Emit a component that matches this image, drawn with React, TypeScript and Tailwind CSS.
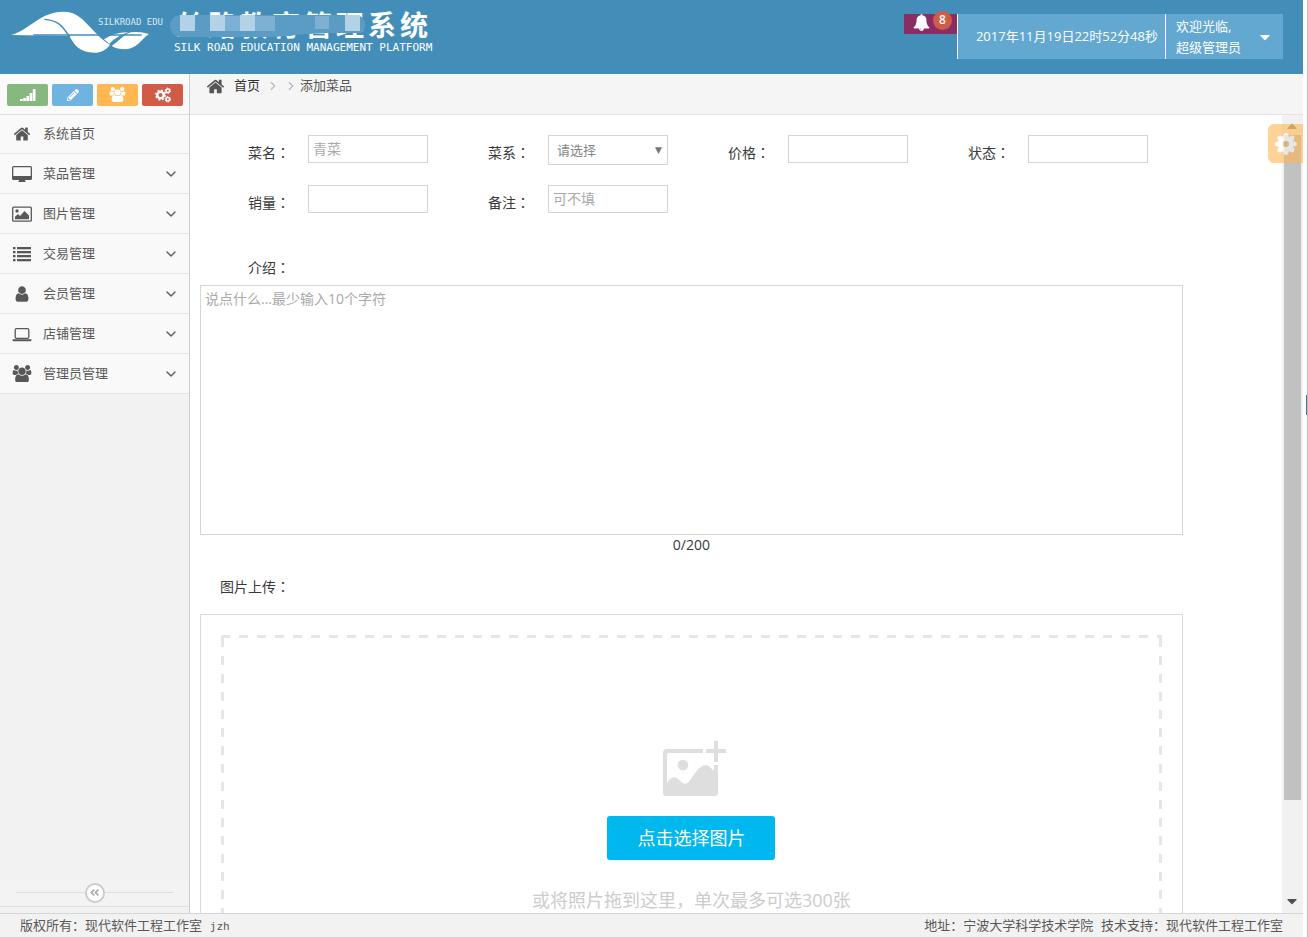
import { useState } from 'react';
import type { ReactNode } from 'react';
import { ChevronDown, ChevronRight } from 'lucide-react';
import { FaAngleDoubleLeft, FaCaretDown, FaPencilAlt } from 'react-icons/fa';

const HomeIcon = ({ className }: { className: string }) => (
  <svg viewBox="0 0 1792 1792" fill="currentColor" className={className} aria-hidden>
    <path d="M1472 992v480q0 26-19 45t-45 19h-384v-384h-256v384h-384q-26 0-45-19t-19-45v-480q0-1 .5-3t.5-3l575-474 575 474q1 2 1 6zm223-69l-62 74q-8 9-21 11h-3q-13 0-21-7l-692-577-692 577q-12 8-24 7-13-2-21-11l-62-74q-8-10-7-23.5t11-21.5l719-599q32-26 76-26t76 26l244 204v-195q0-14 9-23t23-9h192q14 0 23 9t9 23v408l219 182q10 8 11 21.5t-7 23.5z" />
  </svg>
);

const BellIcon = () => (
  <svg viewBox="0 0 1792 1792" fill="currentColor" className="w-[17px]" aria-hidden>
    <path d="M912 1696q0-16-16-16-59 0-101.5-42.5t-42.5-101.5q0-16-16-16t-16 16q0 73 51.5 124.5t124.5 51.5q16 0 16-16zm816-288q0 52-38 90t-90 38h-448q0 106-75 181t-181 75-181-75-75-181h-448q-52 0-90-38t-38-90q50-42 91-88t85-119.5 74.5-158.5 50-206 19.5-260q0-152 117-282.5t307-158.5q-8-19-8-39 0-40 28-68t68-28 68 28 28 68q0 20-8 39 190 28 307 158.5t117 282.5q0 139 19.5 260t50 206 74.5 158.5 85 119.5 91 88z" />
  </svg>
);

const GroupIcon = ({ className }: { className: string }) => (
  <svg viewBox="0 0 2048 1792" fill="currentColor" className={className} aria-hidden>
    <path d="M657 896q-162 5-265 128h-134q-82 0-138-40.5t-56-118.5q0-353 124-353 6 0 43.5 21t97.5 42.5 119 21.5q67 0 133-23-5 37-5 66 0 139 81 256zm1071 637q0 120-73 189.5t-194 69.5h-874q-121 0-194-69.5t-73-189.5q0-53 3.5-103.5t14-109 26.5-108.5 43-97.5 62-81 85.5-53.5 111.5-20q10 0 43 21.5t73 48 107 48 135 21.5 135-21.5 107-48 73-48 43-21.5q61 0 111.5 20t85.5 53.5 62 81 43 97.5 26.5 108.5 14 109 3.5 103.5zm-1024-1277q0 106-75 181t-181 75-181-75-75-181 75-181 181-75 181 75 75 181zm704 384q0 159-112.5 271.5t-271.5 112.5-271.5-112.5-112.5-271.5 112.5-271.5 271.5-112.5 271.5 112.5 112.5 271.5zm576 225q0 78-56 118.5t-138 40.5h-134q-103-123-265-128 81-117 81-256 0-29-5-66 66 23 133 23 59 0 119-21.5t97.5-42.5 43.5-21q124 0 124 353zm-128-609q0 106-75 181t-181 75-181-75-75-181 75-181 181-75 181 75 75 181z" />
  </svg>
);

const UserIcon = ({ className }: { className: string }) => (
  <svg viewBox="0 0 1792 1792" fill="currentColor" className={className} aria-hidden>
    <path d="M1536 1399q0 109-62.5 187t-150.5 78h-854q-88 0-150.5-78t-62.5-187q0-85 8.5-160.5t31.5-152 58.5-131 94-89 134.5-34.5q131 128 313 128t313-128q76 0 134.5 34.5t94 89 58.5 131 31.5 152 8.5 160.5zm-256-887q0 159-112.5 271.5t-271.5 112.5-271.5-112.5-112.5-271.5 112.5-271.5 271.5-112.5 271.5 112.5 112.5 271.5z" />
  </svg>
);

const DesktopIcon = () => (
  <svg viewBox="0 0 20 18" fill="currentColor" className="w-5" aria-hidden>
    <path fillRule="evenodd" d="M1.5 1h17A1.5 1.5 0 0 1 20 2.500v11a1.500 1.500 0 0 1-1.500 1.500H13v1.500h1V17H6v-.5h1V15H1.500A1.500 1.500 0 0 1 0 13.500v-11A1.500 1.500 0 0 1 1.500 1zM1.300 2.300v8.700h17.400V2.300z" />
  </svg>
);

const PictureIcon = () => (
  <svg viewBox="0 0 20 18" className="w-5" aria-hidden>
    <rect x="0.700" y="2.200" width="18.600" height="14" rx="1" fill="none" stroke="currentColor" strokeWidth="1.300" />
    <circle cx="5" cy="6" r="1.700" fill="currentColor" />
    <path d="M3 14.200v-2.500l3-2.700 2 2 4.500-5L17 10.500v3.700z" fill="currentColor" />
  </svg>
);

const ListIcon = () => (
  <svg viewBox="0 0 20 18" fill="currentColor" className="w-5" aria-hidden>
    {[2, 6, 10, 14].map((y) => (
      <g key={y}>
        <rect x="1" y={y} width="2.500" height="2.300" />
        <rect x="5" y={y} width="14" height="2.300" />
      </g>
    ))}
  </svg>
);

const LaptopIcon = () => (
  <svg viewBox="0 0 20 18" className="w-5" aria-hidden>
    <rect x="3.200" y="3.700" width="13.600" height="9.600" rx="1.300" fill="none" stroke="currentColor" strokeWidth="1.300" />
    <path d="M0.500 14.300h19v1a1.200 1.200 0 0 1-1.200 1H1.700a1.200 1.200 0 0 1-1.200-1z" fill="currentColor" />
  </svg>
);

const SignalIcon = () => (
  <svg viewBox="0 0 16 14" fill="currentColor" className="w-4" aria-hidden>
    <path d="M0 11h2.700v2H0zM3.200 10h2.700v3H3.200zM6.400 8h2.700v5H6.400zM9.600 5h2.700v8H9.600zM12.800 1h2.700v12h-2.700z" />
  </svg>
);

const CogsIcon = () => (
  <svg viewBox="0 0 16 16" fill="none" stroke="currentColor" className="w-4" aria-hidden>
    <circle cx="5.500" cy="8" r="3.200" strokeWidth="2.400" />
    <circle cx="5.500" cy="8" r="4.600" strokeWidth="1.700" strokeDasharray="1.900 1.713" />
    <circle cx="12.800" cy="3.700" r="1.800" strokeWidth="1.500" />
    <circle cx="12.800" cy="3.700" r="2.700" strokeWidth="1" strokeDasharray="1.500 1.327" />
    <circle cx="12.800" cy="12.300" r="1.800" strokeWidth="1.500" />
    <circle cx="12.800" cy="12.300" r="2.700" strokeWidth="1" strokeDasharray="1.500 1.327" />
  </svg>
);

const UploadIcon = () => (
  <svg viewBox="0 0 64 56" className="w-16" fill="#dedede" aria-hidden>
    <path d="M4 8h36v4H6a2 2 0 0 0-2 2v28c3-6 8-8 12-3 4 4 7 6 12-1 5-8 12-18 19-12l4 4V24h4v28a3 3 0 0 1-3 3H3a3 3 0 0 1-3-3V12a4 4 0 0 1 4-4z" />
    <circle cx="20" cy="24" r="5.300" />
    <path d="M51 0h4v8h8v4h-8v9h-4v-9h-8V8h8z" />
  </svg>
);

// flower-shaped cog of the settings tab
const FlowerIcon = () => (
  <svg viewBox="0 0 24 24" className="w-6" aria-hidden>
    <g fill="#fff">
      {[0, 45, 90, 135, 180, 225, 270, 315].map((a) => (
        <ellipse key={a} cx="12" cy="5.500" rx="2.800" ry="4.500" transform={`rotate(${a} 12 12)`} />
      ))}
      <circle cx="12" cy="12" r="6" />
    </g>
    <circle cx="12" cy="12" r="3" fill="#e0b050" />
  </svg>
);

const Logo = () => (
  <svg viewBox="30 25 420 140" className="h-12 w-[140px] shrink-0" aria-hidden>
    <path fill="#fff" d="M33 104C90 88 120 34 190 34C252 34 266 92 330 133C318 150 300 157 285 157C235 157 222 130 208 107z" />
    <path fill="#fff" d="M335 137C360 120 370 104 392 96Q420 92 447 101C425 115 410 147 375 147Q352 147 335 137zM328 130L312 117Q345 95 385 96Q355 104 328 130z" />
    <path fill="none" stroke="#438eb9" strokeWidth="4" d="M133 57C185 60 192 90 210 110M100 104H425" />
  </svg>
);

const shortcuts: { label: string; tone: string; icon: ReactNode }[] = [
  { label: '统计', tone: 'bg-[#87b87f]', icon: <SignalIcon /> },
  { label: '编辑', tone: 'bg-[#6fb3e0]', icon: <FaPencilAlt size={12} /> },
  { label: '会员', tone: 'bg-[#ffb752]', icon: <GroupIcon className="w-[17px]" /> },
  { label: '设置', tone: 'bg-[#d15b47]', icon: <CogsIcon /> },
];

const menu: { text: string; icon: ReactNode; sub: boolean }[] = [
  { text: '系统首页', icon: <HomeIcon className="w-[18px]" />, sub: false },
  { text: '菜品管理', icon: <DesktopIcon />, sub: true },
  { text: '图片管理', icon: <PictureIcon />, sub: true },
  { text: '交易管理', icon: <ListIcon />, sub: true },
  { text: '会员管理', icon: <UserIcon className="w-[18px]" />, sub: true },
  { text: '店铺管理', icon: <LaptopIcon />, sub: true },
  { text: '管理员管理', icon: <GroupIcon className="w-5" />, sub: true },
];

function Header() {
  return (
    <header className="flex h-[74px] shrink-0 items-start justify-between bg-[#438eb9] pr-5 text-white">
      <div className="flex pl-[10px]">
        <div className="relative pt-2">
          <Logo />
          <span className="absolute top-4 left-[88px] font-['DejaVu_Sans_Mono',monospace] text-[9px] leading-3 whitespace-nowrap text-[#d8e8f2]">SILKROAD EDU</span>
        </div>
        <div className="pt-2 pl-6">
          <div className="relative">
            <h1 className="flex gap-1 pl-[2px] font-['Noto_Sans_CJK_SC',sans-serif] text-[28px] leading-8 font-bold">
              {'丝路教育管理系统'.split('').map((c) => (
                <span key={c}>{c}</span>
              ))}
            </h1>
            {/* smudge over the first six characters */}
            <svg viewBox="0 0 200 26" className="absolute top-1 -left-1 w-[200px]" aria-hidden>
              <path fill="#5b9cc5" d="M10 3h177a10 10 0 0 1 4 18H152L102 25H12a10.500 10.500 0 0 1-2-22z" />
              <path fill="#7db0d2" d="M55 4h15v15H55zM85 4h20v15H85zM145 4h14v13h-14z" />
              <path fill="#b4d2e6" d="M10 3h15v16H10zM40 3h15v16H40zM70 3h15v16H70zM175 3h15v16h-15z" />
            </svg>
          </div>
          <p className="font-['DejaVu_Sans_Mono',monospace] text-[11px] leading-4 whitespace-nowrap">SILK ROAD EDUCATION MANAGEMENT PLATFORM</p>
        </div>
      </div>

      <div className="flex items-start pt-[14px]">
        <button type="button" aria-label="通知" className="flex h-5 items-start gap-[3px] bg-[#892e65] pr-[5px] pl-[9px]">
          <BellIcon />
          <span className="-mt-[3px] h-[19px] rounded-full bg-[#d15b47] px-[6px] font-['Open_Sans',sans-serif] text-xs leading-[18px] font-semibold">8</span>
        </button>
        <div className="flex h-[45px] items-center border-l border-white bg-[#62a8d1] pr-[7px] pl-[18px] text-[13px]">2017年11月19日22时52分48秒</div>
        <button type="button" className="flex h-[45px] w-[118px] items-center justify-between border-l border-white bg-[#62a8d1] pr-[10px] pl-[10px] text-left text-[13px] leading-[21px]">
          <span>
            欢迎光临,
            <br />
            超级管理员
          </span>
          <FaCaretDown size={16} />
        </button>
      </div>
    </header>
  );
}

function Sidebar() {
  return (
    <aside className="flex w-[190px] shrink-0 flex-col border-r border-[#ccc] bg-[#f2f2f2]">
      <div className="flex h-[41px] items-center gap-1 border-b border-[#ddd] bg-[#fafafa] pt-px pl-[7px]">
        {shortcuts.map((s) => (
          <button key={s.label} type="button" aria-label={s.label} className={`flex h-[22px] w-[41px] items-center justify-center rounded-xs text-white ${s.tone}`}>
            {s.icon}
          </button>
        ))}
      </div>
      <nav>
        {menu.map((m) => (
          <a key={m.text} href="#" className="flex h-10 items-center border-b border-[#e5e5e5] bg-[#f9f9f9] pr-[10px] pl-3 text-[13px] text-[#585858] first:h-[39px]">
            <span className="flex w-5 justify-center">{m.icon}</span>
            <span className="flex-1 pl-[11px]">{m.text}</span>
            {m.sub && <ChevronDown size={16} strokeWidth={2} />}
          </a>
        ))}
      </nav>
      <div className="mt-auto mb-[6px] flex h-7 items-center border-b border-[#e0e0e0] bg-[#f3f3f3] px-4">
        <span className="h-px flex-1 bg-[#ddd]" />
        <button type="button" aria-label="收起菜单" className="flex size-5 items-center justify-center rounded-full border-2 border-[#ccc] bg-white text-[#aaa]">
          <FaAngleDoubleLeft size={11} />
        </button>
        <span className="h-px flex-1 bg-[#ddd]" />
      </div>
    </aside>
  );
}

const inputClass = 'h-7 w-[120px] border border-[#d5d5d5] bg-white px-1 pb-[2px] text-sm text-[#858585] placeholder:text-[#a9a9a9] outline-none';

// full-width colon centred in its box
const Colon = () => (
  <span lang="zh-TW" className="font-['Noto_Sans_CJK_TC',sans-serif] leading-none">：</span>
);

function Field({ id, label, placeholder }: { id: string; label: string; placeholder?: string }) {
  return (
    <div className="flex h-[50px] w-60 items-start">
      <label htmlFor={id} className="w-[60px] leading-9">{label}<Colon /></label>
      <input id={id} type="text" placeholder={placeholder} className={inputClass} />
    </div>
  );
}

function DishForm() {
  const [intro, setIntro] = useState('');

  return (
    <form className="min-w-0 flex-1 pt-5 text-sm text-[#393939]">
      <div className="flex flex-wrap pl-[58px]">
        <Field id="name" label="菜名" placeholder="青菜" />
        <div className="flex h-[50px] w-60 items-start">
          <label htmlFor="cuisine" className="w-[60px] leading-9">菜系<Colon /></label>
          <div className="relative">
            <select id="cuisine" className="h-[30px] w-[120px] appearance-none border border-[#d5d5d5] bg-white px-2 text-[13px] text-[#858585]">
              <option>请选择</option>
            </select>
            <span className="pointer-events-none absolute top-[9px] right-[6px] font-['DejaVu_Sans',sans-serif] text-[9px] leading-3 text-[#777]">▼</span>
          </div>
        </div>
        <Field id="price" label="价格" />
        <Field id="status" label="状态" />
        <Field id="sales" label="销量" />
        <Field id="remark" label="备注" placeholder="可不填" />
      </div>

      <label htmlFor="intro" className="mt-[15px] block pl-[58px] leading-9">介绍<Colon /></label>
      <div className="ml-[10px] w-[90%]">
        <textarea
          id="intro"
          maxLength={200}
          value={intro}
          onChange={(e) => setIntro(e.target.value)}
          placeholder="说点什么...最少输入10个字符"
          className="-mt-px block h-[250px] w-full resize-none border border-[#d5d5d5] px-1 py-[3px] text-sm outline-none placeholder:text-[#a9a9a9]"
        />
        <p className="text-center leading-5">{intro.length}/200</p>

        <h2 className="pt-[14px] pl-5 leading-9">图片上传<Colon /></h2>
        <div className="mt-[9px] border border-[#dadada] p-5">
          {/* drop zone outline */}
          <div className="h-[3px] bg-[repeating-linear-gradient(90deg,#e6e6e6_0_9px,transparent_9px_18px)]" />
          <div className="flex h-[360px]">
            <div className="w-[3px] bg-[repeating-linear-gradient(180deg,#e6e6e6_0_9px,transparent_9px_18px)]" />
            <div className="flex flex-1 flex-col items-center pt-[103px]">
              <div className="pl-[7px]">
                <UploadIcon />
              </div>
              <button type="button" className="mt-[19px] h-11 w-[168px] rounded-[3px] bg-[#00b7ee] text-lg text-white">点击选择图片</button>
              <p className="mt-[27px] text-lg leading-[26px] text-[#ccc]">或将照片拖到这里，单次最多可选300张</p>
            </div>
            <div className="w-[3px] bg-[repeating-linear-gradient(180deg,#e6e6e6_0_9px,transparent_9px_18px)]" />
          </div>
        </div>
      </div>
    </form>
  );
}

export default function App() {
  return (
    <div className="flex h-screen overflow-hidden bg-white font-['Open_Sans','Noto_Sans_CJK_SC',sans-serif]">
      <div className="flex min-w-0 flex-1 flex-col">
        <Header />
        <div className="flex min-h-0 flex-1">
          <Sidebar />
          <main className="relative flex min-w-0 flex-1 flex-col">
            <div className="h-[41px] shrink-0 border-b border-[#e5e5e5] bg-[#f5f5f5] pl-4">
              <nav className="flex h-6 items-center text-[13px] text-[#555]">
                <HomeIcon className="w-[19px]" />
                <a href="#" className="pl-[9px] text-[#333]">首页</a>
                <ChevronRight size={14} className="ml-[6px] text-[#b2b6bf]" />
                <ChevronRight size={14} className="mr-[2px] ml-1 text-[#b2b6bf]" />
                <span>添加菜品</span>
              </nav>
            </div>
            <div className="flex min-h-0 flex-1 overflow-hidden">
              <DishForm />
              <div className="flex w-[21px] flex-col items-center bg-[#f1f1f1] pr-px" aria-hidden>
                <FaCaretDown size={16} className="mt-1 rotate-180 text-[#888]" />
                <div className="h-[665px] w-[17px] bg-[#c1c1c1]" />
                <FaCaretDown size={16} className="mt-auto mb-1 text-[#505050]" />
              </div>
            </div>
            <button type="button" aria-label="页面设置" className="absolute top-[50px] right-0 flex h-[39px] w-[35px] items-center justify-center rounded-l-md bg-[#ffb752] opacity-60">
              <FlowerIcon />
            </button>
          </main>
        </div>
        <footer className="flex h-6 shrink-0 items-center justify-between border-t border-[#d5d5d5] bg-[#f2f2f2] pr-5 pl-5 font-['DejaVu_Sans_Mono','Noto_Sans_CJK_SC',monospace] text-[13px] text-[#585858]">
          <p>
            版权所有：现代软件工程工作室 <span className="text-[11px]">jzh</span>
          </p>
          <p>地址：宁波大学科学技术学院 技术支持：现代软件工程工作室</p>
        </footer>
      </div>
      <div className="flex w-[5px] items-center justify-end border-r border-[#bbb]" aria-hidden>
        <span className="mb-32 h-5 w-px bg-[#3b78c4]" />
      </div>
    </div>
  );
}
